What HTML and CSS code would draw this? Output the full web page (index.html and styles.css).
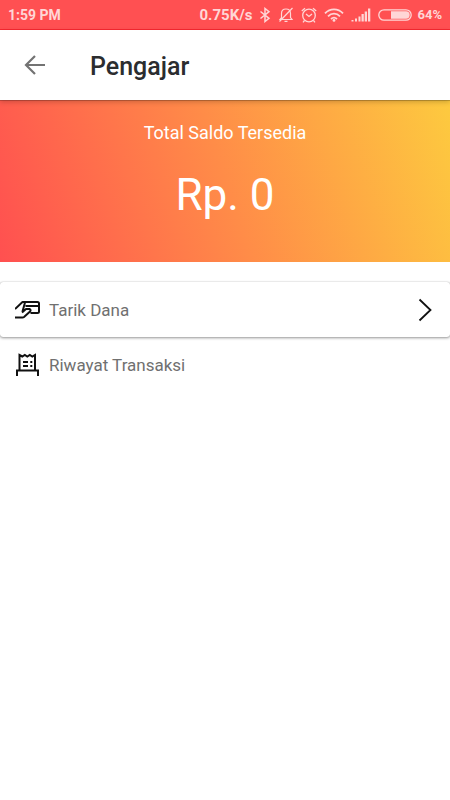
FILE: index.html
```html
<!DOCTYPE html>
<html lang="id">
<head>
<meta charset="utf-8">
<meta name="viewport" content="width=device-width, initial-scale=1">
<title>Pengajar</title>
<link rel="stylesheet" href="styles.css">
</head>
<body>
<div class="status">
  <span class="clock">1:59 PM</span>
  <div class="indicators">
    <span class="speed">0.75K/s</span>
    <svg width="12" height="16" viewBox="0 0 12 16" fill="none" stroke="currentColor" stroke-width="1.5" aria-hidden="true"><path d="M1.5 4.5 10 11.3 6 14.5V1.5l4 3.2L1.5 11.5"/></svg>
    <svg class="bell" width="16" height="16" viewBox="0 0 16 16" fill="none" stroke="currentColor" stroke-width="1.2" aria-hidden="true"><path d="M3.5 11.8V6.5C3.5 3.8 5.3 2 8 2s4.5 1.8 4.5 4.5v4l1.5 2H2l1.5-2M6.5 14.3h3M14.5 1 1.5 14.5"/></svg>
    <svg class="alarm" width="16" height="16" viewBox="0 0 16 16" fill="none" stroke="currentColor" stroke-width="1.3" aria-hidden="true"><circle cx="8" cy="8.5" r="6.3"/><path d="m5 7 3 2.5L11 7M.8 4 4 1.2M15.2 4 12 1.2M3.5 13.5 2 15.3M12.5 13.5l1.5 1.8"/></svg>
    <svg class="wifi" width="20" height="14" viewBox="0 0 20 14" fill="none" stroke="currentColor" stroke-width="1.8" aria-hidden="true"><path d="M1 5.3c5-5.3 13-5.3 18 0M4 8.3c3.5-3.6 8.5-3.6 12 0M7 11c2-1.8 4-1.8 6 0"/><circle cx="10" cy="12.4" r="1.4" fill="currentColor" stroke="none"/></svg>
    <svg class="signal" width="20" height="14" viewBox="0 0 20 14" fill="currentColor" aria-hidden="true"><path d="M.5 12h2v1.5h-2zM4 10.500h2v3H4zM7.500 8.500h2v5h-2zM10.500 6h2.300v7.500h-2.300zM13.700 3.500H16v10h-2.300zM17 .5h2.300v13H17z"/></svg>
    <svg class="battery" width="34" height="12" viewBox="0 0 34 12" aria-hidden="true"><rect x=".8" y=".8" width="32.4" height="10.4" rx="5.2" fill="none" stroke="currentColor" stroke-width="1.3"/><path d="M13 2.300h15a3.700 3.700 0 0 1 0 7.400H13z" fill="currentColor"/></svg>
    <span class="percent">64%</span>
  </div>
</div>
<header class="bar">
  <button class="back" type="button" aria-label="Kembali">
    <svg width="22" height="22" viewBox="0 0 22 22" fill="none" stroke="currentColor" stroke-width="2.2" aria-hidden="true"><path d="M21 11H2.5M11 2l-9 9 9 9"/></svg>
  </button>
  <h1 class="title">Pengajar</h1>
</header>
<main>
  <section class="balance">
    <h2 class="label">Total Saldo Tersedia</h2>
    <p class="amount">Rp. 0</p>
  </section>
  <nav class="menu">
    <a class="item raised" href="#tarik">
      <svg class="icon" width="26" height="24" viewBox="0 0 26 24" fill="none" stroke="currentColor" stroke-width="2" stroke-linejoin="round" aria-hidden="true"><path d="M0 11 7.500 4H22.500q1.500 0 1.500 1.500V13.500q0 1.500-1.500 1.500H15.500M10.500 8H24M10 4.500 7.500 13.500M7 14.500l4-3.500h3.500q2.200 1 0 3L9 19q-.6.500-1.500.5H0"/></svg>
      <span>Tarik Dana</span>
      <svg class="chevron" width="14" height="24" viewBox="0 0 14 24" fill="none" stroke="currentColor" stroke-width="1.800" aria-hidden="true"><path d="m1.500 1.500 11 10.500-11 10.500"/></svg>
    </a>
    <a class="item" href="#riwayat">
      <svg class="icon" width="26" height="24" viewBox="0 0 26 24" fill="none" stroke="currentColor" stroke-width="2" aria-hidden="true"><path d="M4.500 18V2L7.300 3.500 9.800 2l2.500 1.500L14.800 2l2.500 1.500L20 2v16M2 23v-5.500h21V23"/><path d="M8 9h5M8 13h5M15.300 9h2M15.300 13h2"/></svg>
      <span>Riwayat Transaksi</span>
    </a>
  </nav>
</main>
</body>
</html>
```
FILE: styles.css
```css
* {
  box-sizing: border-box;
}

body {
  margin: 0;
  background: #fff;
  font-family: Roboto, "Liberation Sans", sans-serif;
}

.status {
  display: flex;
  align-items: center;
  justify-content: space-between;
  height: 30px;
  padding: 0 8px;
  border-bottom: 1px solid #f82830;
  background: #ff5052;
  color: #ffd6d6;
  font-size: 14px;
  font-weight: 700;
}

.indicators {
  display: flex;
  align-items: center;
  gap: 7px;
}

.speed {
  font-size: 15px;
}

.percent {
  font-size: 13px;
  margin-left: -2px;
}

.bar {
  position: relative;
  display: flex;
  align-items: center;
  gap: 44px;
  height: 70px;
  padding: 0 24px;
  background: #fff;
  box-shadow: 0 1px 0 rgba(0, 0, 0, 0.2), 0 2px 5px rgba(0, 0, 0, 0.2);
}

.back {
  display: flex;
  padding: 0;
  border: 0;
  background: none;
  color: #737373;
}

.title {
  margin: 0;
  padding-top: 4px;
  color: #2b2d2f;
  font-size: 25px;
  font-weight: 500;
  line-height: 32px;
}

.balance {
  padding: 21px 16px 38px;
  background: linear-gradient(72deg, #ff5050, #ff8c48 50%, #fdca3f);
  color: #fff;
  text-align: center;
}

.label {
  margin: 0;
  font-size: 18px;
  font-weight: 400;
  line-height: 24px;
}

.amount {
  margin: 21px 0 0;
  font-size: 44px;
  line-height: 58px;
}

.menu {
  padding-top: 20px;
}

.item {
  display: flex;
  align-items: center;
  gap: 8px;
  height: 55px;
  padding: 0 18px 0 15px;
  color: #707070;
  font-size: 17px;
  text-decoration: none;
}

.raised {
  border-radius: 3px;
  box-shadow: 0 0 1px rgba(0, 0, 0, 0.3), 0 1px 3px rgba(0, 0, 0, 0.4);
}

.icon {
  color: #111;
}

.chevron {
  margin-left: auto;
  color: #111;
}
```
